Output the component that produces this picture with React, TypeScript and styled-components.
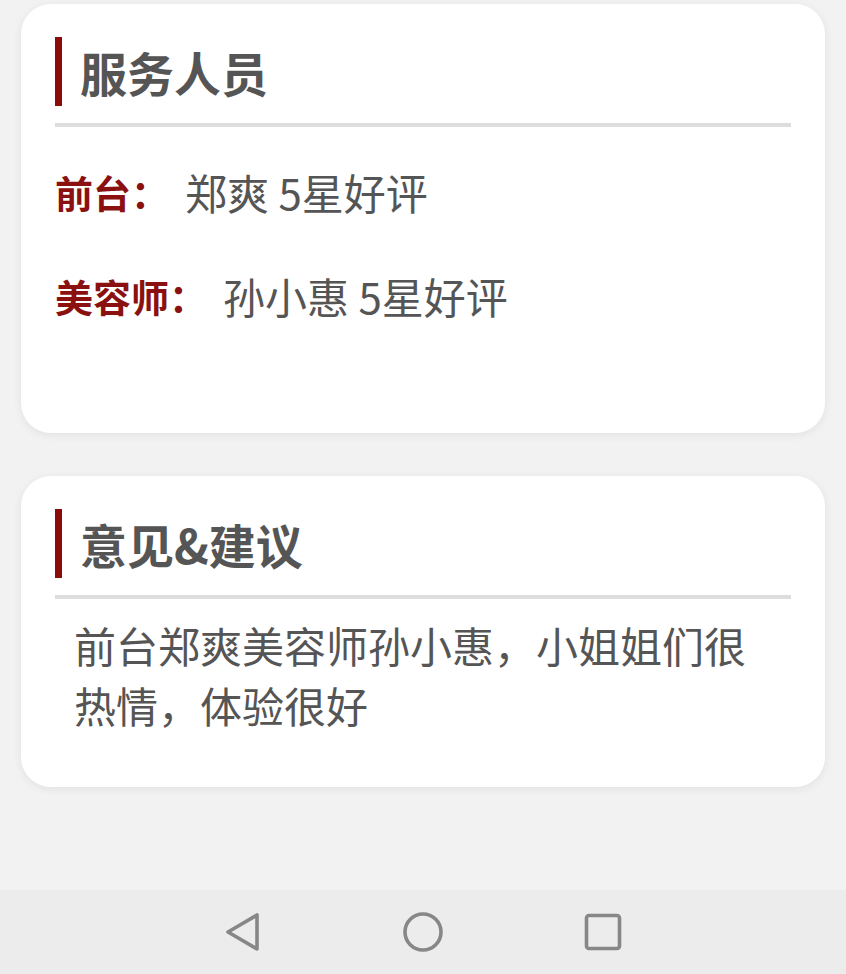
import React from "react";
import styled, { createGlobalStyle } from "styled-components";

const GlobalStyle = createGlobalStyle`
  html, body {
    margin: 0;
    padding: 0;
    background: #f2f2f2;
  }
  body {
    font-family: "Noto Sans CJK SC", "Noto Sans", sans-serif;
  }
`;

const Screen = styled.div`
  display: flex;
  flex-direction: column;
  min-height: 974px;
  width: 846px;
  background: #f2f2f2;
`;

const Content = styled.div`
  flex: 1;
  display: flex;
  flex-direction: column;
  gap: 43px;
  padding: 4px 21px 0;
`;

const Card = styled.section<{ $bottom: number }>`
  background: #ffffff;
  border-radius: 30px;
  box-shadow: 0 2px 10px rgba(0, 0, 0, 0.07);
  padding: 33px 34px ${(p) => p.$bottom}px;
`;

const Header = styled.div`
  display: flex;
  align-items: center;
  height: 69px;
`;

const Accent = styled.span`
  width: 7px;
  height: 69px;
  background: #8b0a0a;
`;

const Title = styled.h2`
  margin: 0 0 0 18px;
  font-size: 47px;
  font-weight: 700;
  line-height: 69px;
  color: #555555;
`;

const Divider = styled.div`
  height: 4px;
  margin-top: 17px;
  background: #dddddd;
`;

const Rows = styled.div`
  display: flex;
  flex-direction: column;
  gap: 54px;
  margin-top: 39px;
`;

const Row = styled.div`
  display: flex;
  align-items: center;
  height: 50px;
`;

const Label = styled.span`
  font-size: 38px;
  font-weight: 700;
  color: #8b1010;
`;

const Value = styled.span`
  margin-left: 16px;
  font-size: 42px;
  color: #555555;
`;

const Body = styled.p`
  margin: 16px 0 0;
  padding: 0 19px;
  font-size: 42px;
  line-height: 60px;
  color: #555555;
`;

const NavBar = styled.nav`
  height: 84px;
  background: #ececec;
  display: flex;
  align-items: center;
  justify-content: center;
`;

const NavButton = styled.div`
  width: 180px;
  display: flex;
  justify-content: center;
  align-items: center;
  height: 84px;
`;

const staff = [
  { label: "前台：", value: "郑爽 5星好评" },
  { label: "美容师：", value: "孙小惠 5星好评" },
];

export default function App() {
  return (
    <Screen>
      <GlobalStyle />
      <Content>
        <Card $bottom={113}>
          <Header>
            <Accent />
            <Title>服务人员</Title>
          </Header>
          <Divider />
          <Rows>
            {staff.map((s) => (
              <Row key={s.label}>
                <Label>{s.label}</Label>
                <Value>{s.value}</Value>
              </Row>
            ))}
          </Rows>
        </Card>
        <Card $bottom={52}>
          <Header>
            <Accent />
            <Title>意见&amp;建议</Title>
          </Header>
          <Divider />
          <Body>前台郑爽美容师孙小惠，小姐姐们很热情，体验很好</Body>
        </Card>
      </Content>
      <NavBar>
        <NavButton>
          <svg width="40" height="42" viewBox="0 0 40 42">
            <path
              d="M34 4 L34 38 L5 21 Z"
              fill="none"
              stroke="#878787"
              strokeWidth="3.6"
              strokeLinejoin="round"
            />
          </svg>
        </NavButton>
        <NavButton>
          <svg width="42" height="42" viewBox="0 0 42 42">
            <circle cx="21" cy="21" r="18" fill="none" stroke="#878787" strokeWidth="3.6" />
          </svg>
        </NavButton>
        <NavButton>
          <svg width="40" height="40" viewBox="0 0 40 40">
            <rect x="3.5" y="3.5" width="33" height="33" rx="2.5" fill="none" stroke="#878787" strokeWidth="3.6" />
          </svg>
        </NavButton>
      </NavBar>
    </Screen>
  );
}
